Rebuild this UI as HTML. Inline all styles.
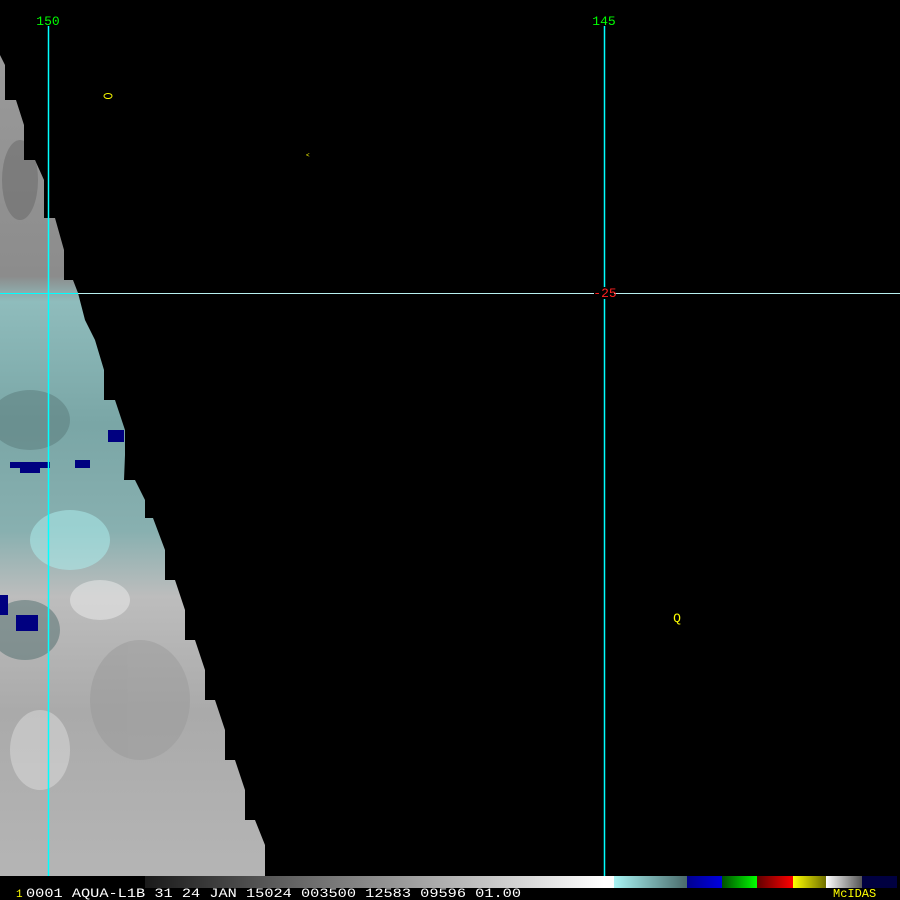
<!DOCTYPE html>
<html><head><style>
html,body{margin:0;padding:0;background:#000;width:900px;height:900px;overflow:hidden}
svg{display:block}
text{font-family:"Liberation Mono","DejaVu Sans Mono",monospace}
</style></head><body>
<svg width="900" height="900" viewBox="0 0 900 900" xmlns="http://www.w3.org/2000/svg">
<defs>
<linearGradient id="v" x1="0" y1="55" x2="0" y2="876" gradientUnits="userSpaceOnUse">
<stop offset="0" stop-color="#9a9a9a"/>
<stop offset="0.27" stop-color="#8c8c8c"/>
<stop offset="0.3" stop-color="#8fbcbc"/>
<stop offset="0.45" stop-color="#7aa6a6"/>
<stop offset="0.58" stop-color="#88b0b0"/>
<stop offset="0.66" stop-color="#bdbdbd"/>
<stop offset="0.8" stop-color="#aaaaaa"/>
<stop offset="1" stop-color="#b5b5b5"/>
</linearGradient>
<linearGradient id="cb" x1="145" y1="0" x2="604" y2="0" gradientUnits="userSpaceOnUse">
<stop offset="0" stop-color="#1a1a1a"/><stop offset="1" stop-color="#ffffff"/>
</linearGradient>
<linearGradient id="cc" x1="614" y1="0" x2="687" y2="0" gradientUnits="userSpaceOnUse">
<stop offset="0" stop-color="#a8f4f4"/><stop offset="1" stop-color="#4a6a6a"/>
</linearGradient>
<linearGradient id="cg" x1="722" y1="0" x2="757" y2="0" gradientUnits="userSpaceOnUse">
<stop offset="0" stop-color="#005000"/><stop offset="1" stop-color="#00ff00"/>
</linearGradient>
<linearGradient id="cr" x1="757" y1="0" x2="793" y2="0" gradientUnits="userSpaceOnUse">
<stop offset="0" stop-color="#600000"/><stop offset="1" stop-color="#ff0000"/>
</linearGradient>
<linearGradient id="cy" x1="793" y1="0" x2="826" y2="0" gradientUnits="userSpaceOnUse">
<stop offset="0" stop-color="#ffff00"/><stop offset="1" stop-color="#707000"/>
</linearGradient>
<linearGradient id="cw" x1="826" y1="0" x2="862" y2="0" gradientUnits="userSpaceOnUse">
<stop offset="0" stop-color="#ffffff"/><stop offset="1" stop-color="#555555"/>
</linearGradient>
<linearGradient id="cbl" x1="687" y1="0" x2="722" y2="0" gradientUnits="userSpaceOnUse">
<stop offset="0" stop-color="#000090"/><stop offset="1" stop-color="#0000e0"/>
</linearGradient>
<clipPath id="cp"><polygon points="0,55 5,65 5,100 16,100 24,125 24,160 35,160 44,180 44,218 55,218 64,250 64,280 73,280 78,293 85,320 95,340 104,370 104,400 115,400 125,430 125,455 124,480 135,480 145,500 145,518 153,518 165,550 165,580 175,580 185,610 185,640 195,640 205,670 205,700 215,700 225,730 225,760 235,760 245,790 245,820 255,820 265,845 265,876 0,876"/></clipPath>
</defs>
<rect width="900" height="900" fill="#000"/>
<g clip-path="url(#cp)">
<rect x="0" y="0" width="300" height="900" fill="url(#v)"/>
<g opacity="0.5">
<ellipse cx="20" cy="180" rx="18" ry="40" fill="#666"/>
<ellipse cx="30" cy="420" rx="40" ry="30" fill="#5a7a7a"/>
<ellipse cx="70" cy="540" rx="40" ry="30" fill="#aef2f2"/>
<ellipse cx="25" cy="630" rx="35" ry="30" fill="#4f6d6d"/>
<ellipse cx="140" cy="700" rx="50" ry="60" fill="#999"/>
<ellipse cx="40" cy="750" rx="30" ry="40" fill="#ddd"/>
<ellipse cx="100" cy="600" rx="30" ry="20" fill="#eee"/>
</g>
</g>
<g fill="#000080">
<rect x="108" y="430" width="16" height="12"/>
<rect x="10" y="462" width="40" height="6"/><rect x="20" y="468" width="20" height="5"/>
<rect x="75" y="460" width="15" height="8"/>
<rect x="0" y="595" width="8" height="20"/>
<rect x="16" y="615" width="22" height="16"/>
</g>
<line x1="78" y1="293.5" x2="900" y2="293.5" stroke="#b8f0f0" stroke-width="1"/>
<line x1="0" y1="293.5" x2="78" y2="293.5" stroke="#00ffff" stroke-width="1"/>
<line x1="48.5" y1="14" x2="48.5" y2="900" stroke="#00ffff" stroke-width="1.5"/>
<line x1="604.5" y1="14" x2="604.5" y2="888" stroke="#00ffff" stroke-width="1.5"/>
<rect x="38" y="13" width="22" height="13" fill="#000"/>
<rect x="593" y="13" width="22" height="13" fill="#000"/>
<text x="48" y="25" fill="#00ff00" font-size="13" text-anchor="middle">150</text>
<text x="604" y="25" fill="#00ff00" font-size="13" text-anchor="middle">145</text>
<rect x="594" y="287" width="20" height="12" fill="#000"/>
<text x="605" y="297" fill="#ff2020" font-size="13" text-anchor="middle">-25</text>
<ellipse cx="108" cy="96" rx="4" ry="2.5" fill="none" stroke="#ffff00" stroke-width="1"/>
<text x="306" y="157" fill="#ffff00" font-size="6">&lt;</text>
<text x="677" y="622" fill="#ffff00" font-size="13" text-anchor="middle">Q</text>
<rect x="0" y="876" width="900" height="24" fill="#000"/>
<rect x="145" y="876" width="459" height="12" fill="url(#cb)"/>
<rect x="604" y="876" width="10" height="12" fill="#fff"/>
<rect x="614" y="876" width="73" height="12" fill="url(#cc)"/>
<rect x="687" y="876" width="35" height="12" fill="url(#cbl)"/>
<rect x="722" y="876" width="35" height="12" fill="url(#cg)"/>
<rect x="757" y="876" width="36" height="12" fill="url(#cr)"/>
<rect x="793" y="876" width="33" height="12" fill="url(#cy)"/>
<rect x="826" y="876" width="36" height="12" fill="url(#cw)"/>
<rect x="862" y="876" width="35" height="12" fill="#000040"/>
<text x="16" y="897" fill="#ffff00" font-size="11">1</text>
<text x="26" y="897" fill="#fff" font-size="13" textLength="495" lengthAdjust="spacingAndGlyphs">0001 AQUA-L1B  31 24 JAN 15024 003500 12583 09596 01.00</text>
<text x="833" y="897" fill="#ffff00" font-size="12">McIDAS</text>
</svg>
</body></html>
